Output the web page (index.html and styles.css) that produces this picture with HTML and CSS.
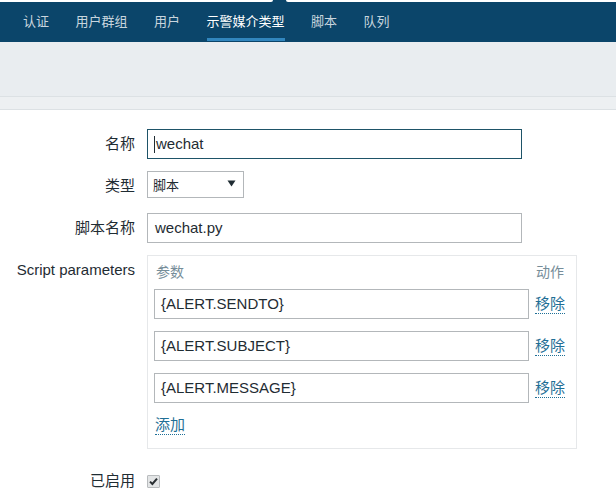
FILE: index.html
```html
<!DOCTYPE html>
<html lang="zh">
<head>
<meta charset="utf-8">
<link rel="stylesheet" href="styles.css">
</head>
<body>
<div class="topstrip">
  <div class="strip-left"></div>
  <div class="strip-gap"></div>
  <div class="strip-right"></div>
</div>
<nav class="nav">
  <a class="nav-item">认证</a>
  <a class="nav-item">用户群组</a>
  <a class="nav-item">用户</a>
  <a class="nav-item active">示警媒介类型</a>
  <a class="nav-item">脚本</a>
  <a class="nav-item">队列</a>
</nav>
<div class="header"></div>
<div class="band"></div>
<main class="form">
  <div class="row">
    <label class="label">名称</label>
    <div class="field"><div class="input focused"><span class="caret"></span>wechat</div></div>
  </div>
  <div class="row">
    <label class="label">类型</label>
    <div class="field">
      <div class="select"><span>脚本</span>
        <svg width="9" height="7" viewBox="0 0 9 7"><path d="M0.5 0.5 H8.5 L4.5 6.5 Z" fill="#1f2c33"/></svg>
      </div>
    </div>
  </div>
  <div class="row">
    <label class="label">脚本名称</label>
    <div class="field"><div class="input">wechat.py</div></div>
  </div>
  <div class="row">
    <label class="label">Script parameters</label>
    <div class="field">
      <div class="params">
        <div class="params-head"><span>参数</span><span>动作</span></div>
        <div class="param-row"><div class="input">{ALERT.SENDTO}</div><a class="link">移除</a></div>
        <div class="param-row"><div class="input">{ALERT.SUBJECT}</div><a class="link">移除</a></div>
        <div class="param-row"><div class="input">{ALERT.MESSAGE}</div><a class="link">移除</a></div>
        <div class="add-row"><a class="link">添加</a></div>
      </div>
    </div>
  </div>
  <div class="row row-check">
    <label class="label">已启用</label>
    <div class="field field-check">
      <span class="checkbox">
        <svg width="11" height="11" viewBox="0 0 11 11"><path d="M2 5.6 L4.4 8 L9 2.6" fill="none" stroke="#2a2f33" stroke-width="2"/></svg>
      </span>
    </div>
  </div>
</main>
</body>
</html>
```

FILE: styles.css
```css
* { box-sizing: border-box; }
html, body { margin: 0; padding: 0; background: #ffffff; }
body {
  font-family: "Liberation Sans", "Noto Sans CJK SC", sans-serif;
  color: #1f2c33;
  font-size: 15px;
}

.topstrip {
  display: flex;
  height: 2px;
  background: #0b456a;
}
.strip-left { width: 273px; background: #fff; border-bottom-right-radius: 2px; }
.strip-gap { width: 13px; }
.strip-right { flex: 1; background: #fff; border-bottom-left-radius: 2px; }

.nav {
  display: flex;
  height: 40px;
  background: #0b456a;
  padding-left: 23px;
  gap: 26.5px;
}
.nav-item {
  display: block;
  font-size: 13px;
  line-height: 16px;
  height: 39px;
  padding-top: 12px;
  color: #c8d5de;
  border-bottom: 3px solid transparent;
}
.nav-item.active {
  color: #ffffff;
  border-bottom-color: #3186be;
}

.header {
  height: 55px;
  background: #e9edf0;
  border-bottom: 1px solid #dce1e4;
}
.band {
  height: 13px;
  background: #edf0f2;
  border-bottom: 1px solid #dce1e4;
}

.form {
  padding-top: 19px;
  display: flex;
  flex-direction: column;
  gap: 12px;
}
.row {
  display: grid;
  grid-template-columns: 135px 1fr;
  column-gap: 12px;
  align-items: start;
}
.row-check { margin-top: 5px; }
.label {
  text-align: right;
  line-height: 30px;
  font-size: 15px;
  color: #1f2c33;
  white-space: nowrap;
}
.field { display: flex; }

.input {
  width: 375px;
  flex: 0 0 375px;
  height: 30px;
  border: 1px solid #b3b7ba;
  background: #fff;
  padding: 0 7px;
  line-height: 28px;
  font-size: 15px;
  color: #1f2c33;
  white-space: nowrap;
  display: flex;
  align-items: center;
}
.input.focused { border-color: #1e5368; }
.caret {
  display: inline-block;
  width: 1px;
  height: 17px;
  background: #1f2c33;
  margin-left: -1px;
  margin-right: 1px;
}

.select {
  width: 97px;
  height: 27px;
  border: 1px solid #b3b7ba;
  background: #fff;
  display: flex;
  align-items: center;
  justify-content: space-between;
  padding: 0 7px 0 5px;
  font-size: 13px;
}
.select svg { margin-top: -2px; }

.params {
  width: 430px;
  border: 1px solid #e6e8ea;
  padding: 7px 8px 13px 6px;
}
.params-head {
  display: flex;
  justify-content: space-between;
  font-size: 14px;
  line-height: 18px;
  color: #768d99;
  padding-left: 2px;
  padding-right: 4px;
  margin-bottom: 8px;
}
.param-row {
  display: flex;
  align-items: center;
  gap: 6px;
  margin-bottom: 12px;
}
.param-row .input { padding-left: 6px; }
.link {
  flex: 0 0 auto;
  white-space: nowrap;
  color: #1f6f96;
  font-size: 15px;
  line-height: 18px;
  border-bottom: 1px dotted #1f6f96;
  text-decoration: none;
  cursor: pointer;
}
.add-row {
  display: flex;
  margin-top: 13px;
  padding-left: 1px;
}

.field-check { height: 30px; align-items: center; padding-top: 1px; }
.checkbox {
  width: 13px;
  height: 13px;
  border: 1px solid #b9bcbe;
  background: #e3e5e6;
  border-radius: 1px;
  display: flex;
  align-items: center;
  justify-content: center;
}
```
